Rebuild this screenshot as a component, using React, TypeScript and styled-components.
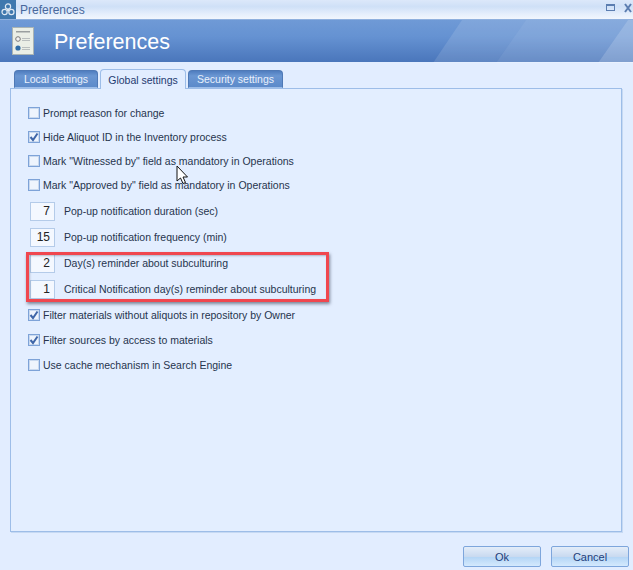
import React from 'react'
import styled, { createGlobalStyle } from 'styled-components'

const GlobalStyle = createGlobalStyle`
   html, body {
      margin: 0;
      padding: 0;
      background: #e2edff;
   }
   body {
      font-family: 'Liberation Sans', Arial, sans-serif;
      font-size: 10.5px;
   }
`

const Window = styled.div`
   position: relative;
   width: 633px;
   height: 570px;
   overflow: hidden;
   display: flex;
   flex-direction: column;
   background: #e2edff;
`

const TitleBar = styled.div`
   height: 19px;
   display: flex;
   align-items: center;
   gap: 4px;
   background: linear-gradient(to bottom, #dce8fa 0%, #cfe0f7 35%, #e6effc 75%, #f2f6fd 100%);
   color: #48689c;
   font-size: 12px;
`

const TitleText = styled.span`
   flex: 1;
`

const WindowButtons = styled.svg`
   margin-right: -1px;
   margin-top: -3px;
`

const Header = styled.div`
   position: relative;
   height: 43px;
   display: flex;
   align-items: center;
   gap: 20px;
   padding-left: 12px;
   color: #fff;
   font-size: 21.5px;
   border-top: 1px solid #8fb0de;
   box-sizing: border-box;
   background: linear-gradient(to bottom, #6f9ad6 0%, #6592d2 40%, #4a76bb 100%);
`

const HeaderStripes = styled.svg`
   position: absolute;
   inset: 0;
`

const HeaderTitle = styled.span`
   position: relative;
   top: 1px;
`

const Body = styled.div`
   flex: 1;
   display: flex;
   flex-direction: column;
   padding: 6px 11px 0 10px;
`

const TabStrip = styled.div`
   display: flex;
   align-items: flex-end;
   gap: 2px;
   height: 20px;
   padding-left: 4px;
   font-size: 10.5px;
`

const Tab = styled.div<{ $active?: boolean; $w: number }>`
   height: ${p => (p.$active ? 20 : 18)}px;
   width: ${p => p.$w}px;
   box-sizing: border-box;
   display: flex;
   align-items: center;
   justify-content: center;
   border-radius: 4px 4px 0 0;
   border: 1px solid ${p => (p.$active ? '#9dbde8' : '#4f79b6')};
   border-bottom: ${p => (p.$active ? '0' : '1px solid #9dbde8')};
   background: ${p =>
      p.$active ? '#e2edff' : 'linear-gradient(to bottom, #4f7dbf 0%, #6a96d2 30%, #5c8aca 100%)'};
   color: ${p => (p.$active ? '#1f3a70' : '#e8f0fc')};
   margin-bottom: ${p => (p.$active ? '-1px' : '0')};
   position: relative;
   z-index: ${p => (p.$active ? 1 : 0)};
`

const Panel = styled.div`
   height: 444px;
   box-sizing: border-box;
   border: 1px solid #9dbde8;
   box-shadow: 1px 1px 0 #c6d9f3;
   padding-top: 12px;
   background: #e3eeff;
   display: flex;
   flex-direction: column;
`

const InputGroup = styled.div`
   display: flex;
   flex-direction: column;
   margin-top: 1px;
`

const Row = styled.div<{ $h: number }>`
   height: ${p => p.$h}px;
   display: flex;
   align-items: center;
   color: #26344d;
   white-space: nowrap;
`

const CheckRow = styled(Row)`
   padding-left: 17px;
   gap: 3px;
`

const InputRow = styled(Row)`
   padding-left: 19px;
   gap: 9px;
`

const Check = styled.span`
   width: 12px;
   height: 12px;
   box-sizing: border-box;
   border: 1px solid #7ea3d8;
   background: #eef4fd;
   box-shadow: inset 0 0 0 1px #c9d9ef;
   display: flex;
   align-items: center;
   justify-content: center;
`

const NumberBox = styled.span`
   width: 25px;
   height: 19px;
   box-sizing: border-box;
   border: 1px solid #b4cbe9;
   background: #f4f8ff;
   display: flex;
   align-items: center;
   justify-content: flex-end;
   padding-right: 4px;
   font-size: 12px;
   color: #222;
`

const Highlight = styled.div`
   position: absolute;
   left: 26px;
   top: 252px;
   width: 303px;
   height: 50px;
   box-sizing: border-box;
   border: 3px solid #f0474f;
   box-shadow: 1px 2px 3px rgba(40, 50, 70, 0.55), inset 1px 1px 2px rgba(40, 50, 70, 0.3);
   pointer-events: none;
`

const Cursor = styled.svg`
   position: absolute;
   left: 176px;
   top: 165px;
`

const Footer = styled.div`
   display: flex;
   justify-content: flex-end;
   gap: 10px;
   margin-top: 14px;
   margin-right: -7px;
`

const Button = styled.button`
   width: 78px;
   height: 21px;
   padding: 0;
   border: 1px solid #7ea6dc;
   border-radius: 2px;
   font-family: inherit;
   font-size: 11px;
   color: #23407a;
   background: linear-gradient(to bottom, #e4edf9 0%, #c9daf0 50%, #b5d6f6 55%, #d4e9fd 100%);
`

const rows = [
   { text: 'Prompt reason for change', checked: false },
   { text: 'Hide Aliquot ID in the Inventory process', checked: true },
   { text: 'Mark "Witnessed by" field as mandatory in Operations', checked: false },
   { text: 'Mark "Approved by" field as mandatory in Operations', checked: false },
]

const inputRows = [
   { value: '7', text: 'Pop-up notification duration (sec)' },
   { value: '15', text: 'Pop-up notification frequency (min)' },
   { value: '2', text: 'Day(s) reminder about subculturing' },
   { value: '1', text: 'Critical Notification day(s) reminder about subculturing' },
]

const lowerRows = [
   { text: 'Filter materials without aliquots in repository by Owner', checked: true },
   { text: 'Filter sources by access to materials', checked: true },
   { text: 'Use cache mechanism in Search Engine', checked: false },
]

const CheckItem = ({ text, checked, h }: { text: string; checked: boolean; h: number }) => (
   <CheckRow $h={h}>
      <Check>
         {checked && (
            <svg width="10" height="10" viewBox="0 0 10 10">
               <path d="M1.5 5 L4 8 L8.5 1.5" fill="none" stroke="#3f66a8" strokeWidth="2" />
            </svg>
         )}
      </Check>
      {text}
   </CheckRow>
)

const AppLogo = () => (
   <svg width="16" height="19" viewBox="0 0 16 19">
      <rect width="16" height="19" fill="#3f78ae" />
      <circle cx="8" cy="6.5" r="2.6" fill="none" stroke="#dfe9f3" strokeWidth="1.2" />
      <circle cx="4.6" cy="12" r="2.6" fill="none" stroke="#dfe9f3" strokeWidth="1.2" />
      <circle cx="11.4" cy="12" r="2.6" fill="none" stroke="#dfe9f3" strokeWidth="1.2" />
      <circle cx="8" cy="10" r="1.2" fill="#dfe9f3" />
   </svg>
)

const PrefsIcon = () => (
   <svg width="22" height="28" viewBox="0 0 22 28">
      <rect x="0.5" y="0.5" width="21" height="27" fill="#eaeee6" stroke="#aab4b4" />
      <rect x="4" y="4" width="14" height="1.5" fill="#9a9f9f" />
      <circle cx="6" cy="12" r="2.3" fill="#f4f4f4" stroke="#777" />
      <rect x="10" y="11" width="8" height="1" fill="#b9bebe" />
      <rect x="10" y="13" width="8" height="1" fill="#b9bebe" />
      <circle cx="6" cy="21" r="2.6" fill="#2f6ca6" />
      <rect x="10" y="20" width="8" height="1" fill="#b9bebe" />
      <rect x="10" y="22" width="8" height="1" fill="#b9bebe" />
   </svg>
)

export default function App() {
   return (
      <Window>
         <GlobalStyle />
         <TitleBar>
            <AppLogo />
            <TitleText>Preferences</TitleText>
            <WindowButtons width="28" height="10" viewBox="0 0 28 10">
               <rect x="0.5" y="1.5" width="8" height="6" fill="none" stroke="#5b7db0" />
               <rect x="0" y="1" width="9" height="2" fill="#5b7db0" />
               <path d="M19 1 L25 9 M25 1 L19 9" stroke="#5b7db0" strokeWidth="2" />
            </WindowButtons>
         </TitleBar>
         <Header>
            <HeaderStripes width="633" height="43" viewBox="0 0 633 43">
               <polygon points="462,0 526,0 496,43 433,43" fill="#ffffff" opacity="0.12" />
               <polygon points="526,0 628,0 598,43 496,43" fill="#ffffff" opacity="0.17" />
               <polygon points="628,0 633,0 633,43 598,43" fill="#ffffff" opacity="0.3" />
            </HeaderStripes>
            <PrefsIcon />
            <HeaderTitle>Preferences</HeaderTitle>
         </Header>
         <Body>
            <TabStrip>
               <Tab $w={84}>Local settings</Tab>
               <Tab $w={86} $active>
                  Global settings
               </Tab>
               <Tab $w={95}>Security settings</Tab>
            </TabStrip>
            <Panel>
               {rows.map(r => (
                  <CheckItem key={r.text} {...r} h={24} />
               ))}
               <InputGroup>
                  {inputRows.map(r => (
                     <InputRow key={r.text} $h={26}>
                        <NumberBox>{r.value}</NumberBox>
                        {r.text}
                     </InputRow>
                  ))}
               </InputGroup>
               {lowerRows.map(r => (
                  <CheckItem key={r.text} {...r} h={25} />
               ))}
            </Panel>
            <Footer>
               <Button>Ok</Button>
               <Button>Cancel</Button>
            </Footer>
         </Body>
         <Highlight />
         <Cursor width="13" height="20" viewBox="0 0 13 20">
            <path d="M1 1 L1 16 L4.5 13 L7 18.5 L9.5 17.5 L7 12 L11.5 12 Z" fill="#fff" stroke="#111" strokeWidth="1" />
         </Cursor>
      </Window>
   )
}
